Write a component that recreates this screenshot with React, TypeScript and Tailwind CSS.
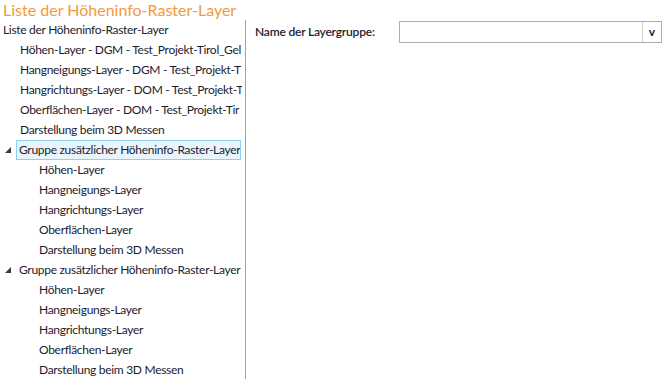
import React from 'react'

type Node = { label: string; children?: string[] }

const topItems: Node[] = [
  { label: 'Höhen-Layer - DGM - Test_Projekt-Tirol_Gel' },
  { label: 'Hangneigungs-Layer - DGM - Test_Projekt-T' },
  { label: 'Hangrichtungs-Layer - DOM - Test_Projekt-T' },
  { label: 'Oberflächen-Layer - DOM - Test_Projekt-Tir' },
  { label: 'Darstellung beim 3D Messen' },
]

const groupChildren = [
  'Höhen-Layer',
  'Hangneigungs-Layer',
  'Hangrichtungs-Layer',
  'Oberflächen-Layer',
  'Darstellung beim 3D Messen',
]

const groups: Node[] = [
  { label: 'Gruppe zusätzlicher Höheninfo-Raster-Layer', children: groupChildren },
  { label: 'Gruppe zusätzlicher Höheninfo-Raster-Layer', children: groupChildren },
]

const Row: React.FC<{ indent: string; selected?: boolean; expander?: boolean; children: React.ReactNode }> = (props) => {
  return (
    <div className="flex h-[20px] items-center">
      <div className={`flex h-full shrink-0 items-center ${props.indent}`}>
        {props.expander && (
          <svg width="6" height="6" viewBox="0 0 6 6" className="ml-[5px]">
            <polygon points="6,0 6,6 0,6" fill="#3a3a3a" />
          </svg>
        )}
      </div>
      <div
        className={`flex h-[20px] min-w-0 items-center overflow-hidden whitespace-nowrap border px-[2px] ${
          props.selected ? 'mr-[2px] border-[#8fd0f2] bg-[#e8f5fd]' : 'border-transparent'
        }`}
      >
        {props.children}
      </div>
    </div>
  )
}

export default function App() {
  return (
    <div className="flex h-[379px] w-[667px] flex-col bg-white font-['Lato',sans-serif] text-[12px] text-[#1c1c30]">
      <div className="h-[20px] pl-[3px] text-[16px] leading-[20px] text-[#f39a3c]">Liste der Höheninfo-Raster-Layer</div>
      <div className="flex min-h-0 flex-1">
        <div className="w-[246px] shrink-0 overflow-hidden border-r border-[#a0a0a0] pr-[2px] tracking-[-0.3px]">
          <Row indent="w-0">Liste der Höheninfo-Raster-Layer</Row>
          {topItems.map((n, i) => (
            <Row key={i} indent="w-[17px]">
              {n.label}
            </Row>
          ))}
          {groups.map((g, gi) => (
            <div key={gi}>
              <Row indent="w-[16px]" expander selected={gi === 0}>
                {g.label}
              </Row>
              {g.children?.map((c, ci) => (
                <Row key={ci} indent="w-[36px]">
                  {c}
                </Row>
              ))}
            </div>
          ))}
        </div>
        <div className="flex flex-1 items-start pl-[9px] pr-[5px] pt-[1px]">
          <div className="flex h-[22px] w-full items-center">
            <span className="w-[144px] shrink-0 font-semibold tracking-[-0.2px]">Name der Layergruppe:</span>
            <div className="flex h-[22px] flex-1 border border-[#acacac] bg-white">
              <div className="flex-1" />
              <div className="flex w-[19px] items-center justify-center border-l border-[#d4d4d4] text-[12px] font-bold text-[#222]">
                v
              </div>
            </div>
          </div>
        </div>
      </div>
    </div>
  )
}
